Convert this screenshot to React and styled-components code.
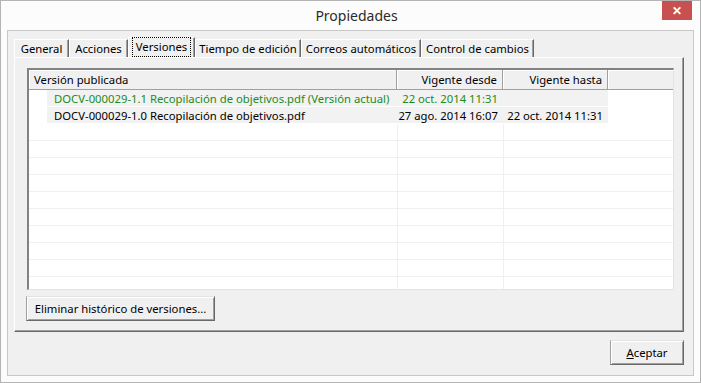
import React from "react";
import styled, { createGlobalStyle } from "styled-components";

const Global = createGlobalStyle`
  html, body {
    margin: 0;
    padding: 0;
    background: #ffffff;
  }
  * {
    box-sizing: border-box;
  }
`;

const Window = styled.div`
  width: 701px;
  height: 383px;
  border: 1px solid #b4b4b4;
  background: #fcfcfc;
  display: flex;
  flex-direction: column;
  font-family: "Noto Sans", "Open Sans", sans-serif;
  font-size: 11.3px;
  color: #000;
`;

const TitleBar = styled.div`
  height: 29px;
  display: grid;
  grid-template-columns: 1fr auto 1fr;
  align-items: start;
`;

const Title = styled.div`
  grid-column: 2;
  padding: 5px 0 0 12px;
  font-size: 14px;
  color: #2b2b2b;
`;

const CloseButton = styled.div`
  grid-column: 3;
  justify-self: end;
  margin-right: 8px;
  width: 30px;
  height: 19px;
  background: #c75050;
  color: #fff;
  font-size: 12px;
  font-weight: 700;
  display: flex;
  align-items: center;
  justify-content: center;
`;

const Client = styled.div`
  flex: 1;
  margin: 0 6px 6px 6px;
  border: 1px solid #c8c8c8;
  background: #f0f0f0;
  padding: 6px 9px 9px 6px;
  display: flex;
  flex-direction: column;
`;

const TabStrip = styled.div`
  display: flex;
  height: 20px;
  align-items: flex-end;
`;

const Tab = styled.div`
  width: ${(p) => p.$w}px;
  height: ${(p) => (p.$active ? 20 : 18)}px;
  border-top: 1px solid #fff;
  border-left: 1px solid #fff;
  border-right: 1px solid #696969;
  box-shadow: inset -1px 0 0 #a0a0a0;
  display: flex;
  align-items: center;
  justify-content: center;
  padding-bottom: 1px;
  white-space: nowrap;
`;

const Focus = styled.span`
  outline: 1px dotted #000;
  padding: 1px 3px 2px 3px;
`;

const Panel = styled.div`
  height: 275px;
  border-top: 1px solid #fff;
  border-left: 1px solid #fff;
  border-right: 1px solid #696969;
  border-bottom: 1px solid #696969;
  box-shadow: inset -1px -1px 0 #a0a0a0;
  padding: 10px 10px 0 12px;
  display: flex;
  flex-direction: column;
`;

const List = styled.div`
  width: 647px;
  height: 222px;
  border-top: 2px solid #828282;
  border-left: 2px solid #828282;
  border-right: 1px solid #e3e3e3;
  border-bottom: 1px solid #e3e3e3;
  background: #fff;
  overflow: hidden;
`;

const Header = styled.div`
  display: flex;
  height: 20px;
  background: #f0f0f0;
  border-bottom: 1px solid #a0a0a0;
`;

const HeadCell = styled.div`
  width: ${(p) => p.$w}px;
  flex: ${(p) => (p.$fill ? 1 : "none")};
  box-shadow: inset 1px 1px 0 #fff;
  border-right: ${(p) => (p.$fill ? "none" : "1px solid #a0a0a0")};
  padding: 0 5px;
  display: flex;
  align-items: center;
  justify-content: ${(p) => (p.$right ? "flex-end" : "flex-start")};
  white-space: nowrap;
`;

const Row = styled.div`
  display: flex;
  height: 17px;
  border-bottom: 1px solid ${(p) => (p.$data ? "#ffffff" : "#f0f0f0")};
  color: ${(p) => (p.$current ? "#228b22" : "#000")};
`;

const Indent = styled.div`
  width: 18px;
  flex: none;
  background: #fff;
`;

const Cell = styled.div`
  width: ${(p) => p.$w}px;
  flex: ${(p) => (p.$fill ? 1 : "none")};
  background: ${(p) => (p.$data ? "#f2f2f2" : "#fff")};
  border-left: ${(p) => (p.$line ? "1px solid #f0f0f0" : "none")};
  padding: 0 5px 0 ${(p) => (p.$right ? 0 : 7)}px;
  display: flex;
  align-items: center;
  justify-content: ${(p) => (p.$right ? "flex-end" : "flex-start")};
  white-space: nowrap;
  overflow: hidden;
`;

const Button = styled.div`
  width: ${(p) => p.$w}px;
  height: 25px;
  background: #f0f0f0;
  border-top: 1px solid #e3e3e3;
  border-left: 1px solid #a0a0a0;
  border-right: 1px solid #696969;
  border-bottom: 1px solid #696969;
  box-shadow: inset 1px 1px 0 #fff, inset -1px -1px 0 #a0a0a0;
  display: flex;
  align-items: center;
  justify-content: center;
  white-space: nowrap;
`;

const PanelButton = styled(Button)`
  margin-top: 6px;
  margin-left: -1px;
`;

const Footer = styled.div`
  display: flex;
  justify-content: flex-end;
  margin-top: 8px;
`;

const tabs = [
  { label: "General", w: 55 },
  { label: "Acciones", w: 59 },
  { label: "Versiones", w: 67, active: true },
  { label: "Tiempo de edición", w: 106 },
  { label: "Correos automáticos", w: 120 },
  { label: "Control de cambios", w: 113 },
];

const versions = [
  {
    name: "DOCV-000029-1.1 Recopilación de objetivos.pdf (Versión actual)",
    from: "22 oct. 2014 11:31",
    to: "",
    current: true,
  },
  {
    name: "DOCV-000029-1.0 Recopilación de objetivos.pdf",
    from: "27 ago. 2014 16:07",
    to: "22 oct. 2014 11:31",
  },
];

export default function App() {
  const empty = Array.from({ length: 10 });
  return (
    <>
      <Global />
      <Window>
        <TitleBar>
          <Title>Propiedades</Title>
          <CloseButton>✕</CloseButton>
        </TitleBar>
        <Client>
          <TabStrip>
            {tabs.map((t) => (
              <Tab key={t.label} $w={t.w} $active={t.active}>
                {t.active ? <Focus>{t.label}</Focus> : t.label}
              </Tab>
            ))}
          </TabStrip>
          <Panel>
            <List>
              <Header>
                <HeadCell $w={368}>Versión publicada</HeadCell>
                <HeadCell $w={106} $right>Vigente desde</HeadCell>
                <HeadCell $w={105} $right>Vigente hasta</HeadCell>
                <HeadCell $fill />
              </Header>
              {versions.map((v) => (
                <Row key={v.name} $data $current={v.current}>
                  <Indent />
                  <Cell $w={350} $data>{v.name}</Cell>
                  <Cell $w={106} $data $right>{v.from}</Cell>
                  <Cell $w={105} $data $right>{v.to}</Cell>
                  <Cell $fill />
                </Row>
              ))}
              {empty.map((_, i) => (
                <Row key={i}>
                  <Cell $w={368} />
                  <Cell $w={106} $line />
                  <Cell $w={105} $line />
                  <Cell $fill />
                </Row>
              ))}
            </List>
            <PanelButton $w={189}>Eliminar histórico de versiones...</PanelButton>
          </Panel>
          <Footer>
            <Button $w={74}>
              <span>
                <u>A</u>ceptar
              </span>
            </Button>
          </Footer>
        </Client>
      </Window>
    </>
  );
}
